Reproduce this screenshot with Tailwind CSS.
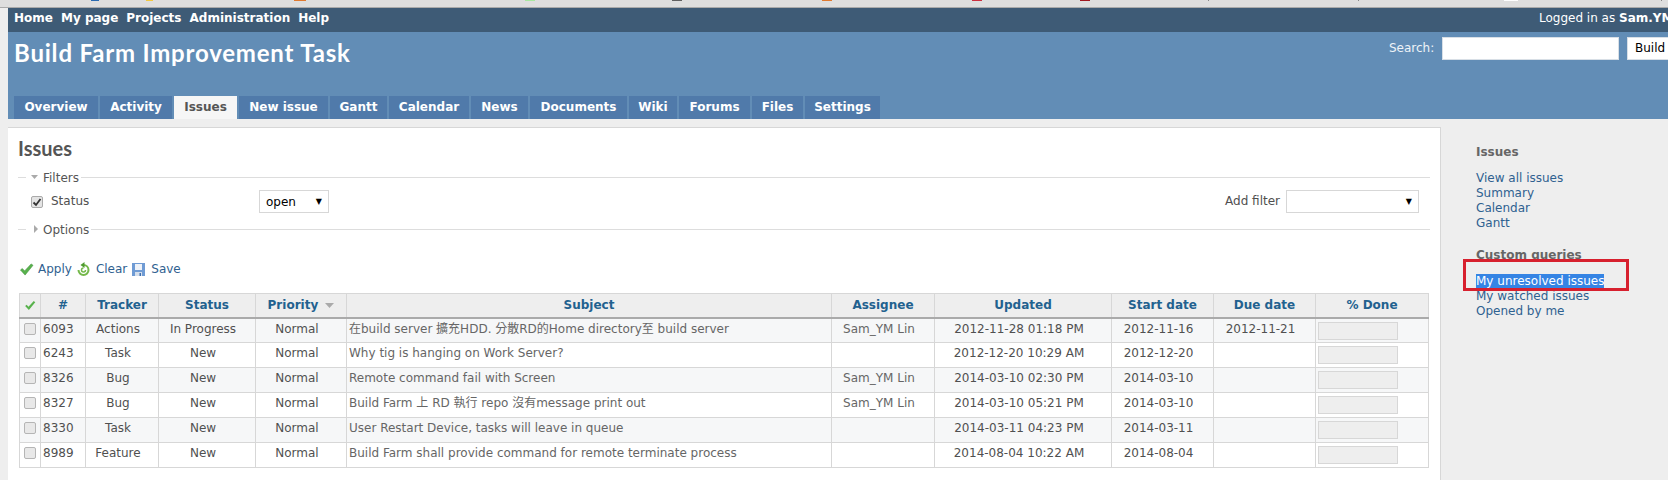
<!DOCTYPE html>
<html lang="en">
<head>
    <meta charset="UTF-8">
    <script src="https://cdn.jsdelivr.net/npm/@tailwindcss/browser@4"></script>
    <title>Issues - Build Farm Improvement Task</title>
</head>
<body class="w-[1668px] h-[480px] overflow-hidden bg-[#eeeeee] font-['DejaVu_Sans','Noto_Sans_CJK_TC',sans-serif] text-[12px] text-[#505050]">

    <!-- browser bookmarks bar, only the bottom edge is visible -->
    <div class="h-[8px] bg-[#dedede] border-b border-b-[#aaaaaa] flex items-start">
        <span class="ml-[91px] w-[8px] h-[1px] bg-[#2a6ab0]"></span>
        <span class="ml-[47px] w-[7px] h-[1px] bg-[#f2c840]"></span>
        <span class="ml-[141px] w-[12px] h-[1px] bg-[#e07a30]"></span>
        <span class="ml-[219px] w-[10px] h-[1px] bg-[#a8e8a0]"></span>
        <span class="ml-[137px] w-[10px] h-[1px] bg-[#606060]"></span>
        <span class="ml-[140px] w-[10px] h-[1px] bg-[#e07a30]"></span>
        <span class="ml-[140px] w-[10px] h-[1px] bg-[#cc3040]"></span>
        <span class="ml-[98px] w-[10px] h-[1px] bg-[#a01820]"></span>
        <span class="ml-[118px] w-[1px] h-[1px] bg-[#888888]"></span>
        <span class="ml-[149px] w-[1px] h-[1px] bg-[#888888]"></span>
        <span class="ml-[145px] w-[14px] h-[1px] bg-[#ffffff]"></span>
        <span class="ml-[143px] w-[1px] h-[1px] bg-[#888888]"></span>
    </div>

    <div class="ml-[8px]">
        <!-- top menu -->
        <div class="h-[24px] bg-[#3e5b76] flex justify-between items-center pl-[6px] pb-[4px] text-white whitespace-nowrap overflow-hidden">
            <div class="flex gap-[8px] font-bold">
                <a>Home</a><a>My page</a><a>Projects</a><a>Administration</a><a>Help</a>
            </div>
            <div class="w-[129px] shrink-0">Logged in as <b>Sam.YM</b></div>
        </div>

        <!-- header -->
        <div class="relative h-[87px] bg-[#628db6] text-white overflow-hidden">
            <div class="flex justify-between pl-[6px]">
                <h1 class="mt-[1px] text-[24px] leading-[40px] font-bold tracking-[0.8px] font-['Lato',sans-serif]">Build Farm Improvement Task</h1>
                <div class="flex items-start shrink-0 w-[279px] pt-[5px] whitespace-nowrap">
                    <span class="w-[53px] shrink-0 leading-[22px] text-[#eef3f8]">Search:</span>
                    <input type="text" class="w-[177px] shrink-0 h-[23px] bg-white border border-[#d8dfe6]">
                    <div class="ml-[8px] w-[90px] shrink-0 h-[23px] pl-[7px] leading-[21px] bg-white border border-[#d8dfe6] text-black">Build Farm</div>
                </div>
            </div>
            <div class="absolute bottom-0 left-[6px] flex gap-[2px] font-bold h-[23px] leading-[23px] whitespace-nowrap">
                <a class="w-[84px] text-center bg-[#507aaa]">Overview</a>
                <a class="w-[72px] text-center bg-[#507aaa]">Activity</a>
                <a class="w-[63px] text-center bg-[#f6f6f6] text-[#555555]">Issues</a>
                <a class="w-[89px] text-center bg-[#507aaa]">New issue</a>
                <a class="w-[57px] text-center bg-[#507aaa]">Gantt</a>
                <a class="w-[80px] text-center bg-[#507aaa]">Calendar</a>
                <a class="w-[57px] text-center bg-[#507aaa]">News</a>
                <a class="w-[97px] text-center bg-[#507aaa]">Documents</a>
                <a class="w-[48px] text-center bg-[#507aaa]">Wiki</a>
                <a class="w-[71px] text-center bg-[#507aaa]">Forums</a>
                <a class="w-[51px] text-center bg-[#507aaa]">Files</a>
                <a class="w-[75px] text-center bg-[#507aaa]">Settings</a>
            </div>
        </div>

        <div class="flex mt-[8px]">
            <!-- content -->
            <div class="w-[1433px] h-[353px] shrink-0 bg-white border-t border-r border-[#d7d7d7] pl-[10px] pr-[10px]">
                <h2 class="mt-[6px] text-[20px] leading-[28px] font-bold text-[#555555] font-['Lato',sans-serif]">Issues</h2>

                <div class="mt-[7px] flex items-center h-[16px] text-[#555555]">
                    <span class="w-[8px] h-px bg-[#dddddd]"></span>
                    <svg class="ml-[5px] w-[8px] h-[8px]" viewBox="0 0 8 8"><path d="M0 2h7L3.500 6z" fill="#aaaaaa"/></svg>
                    <span class="ml-[4px] mt-[2px]">Filters</span>
                    <span class="ml-[2px] grow h-px bg-[#dddddd]"></span>
                </div>
                <div class="mt-[5px] h-[23px] flex items-center pr-[11px]">
                    <span class="ml-[13px] w-[12px] h-[12px] flex items-center justify-center border border-[#aaaaaa] rounded-[2px] bg-[#e4e4e4]">
                        <svg class="w-[10px] h-[10px]" viewBox="0 0 10 10"><path d="M1.500 5.500 4 8l4.500-6" fill="none" stroke="#333333" stroke-width="1.800"/></svg>
                    </span>
                    <span class="ml-[8px] w-[208px] mb-[2px]">Status</span>
                    <div class="w-[70px] h-[23px] border border-[#d7d7d7] pl-[6px] flex items-center justify-between pr-[6px] text-black">open <span class="text-[8px]">▼</span></div>
                    <span class="ml-auto mr-[6px] mb-[2px]">Add filter</span>
                    <div class="w-[133px] h-[23px] border border-[#d7d7d7] flex items-center justify-end pr-[6px] text-black"><span class="text-[8px]">▼</span></div>
                </div>
                <div class="mt-[8px] flex items-center h-[16px] text-[#555555]">
                    <span class="w-[8px] h-px bg-[#dddddd]"></span>
                    <svg class="ml-[6px] w-[8px] h-[8px]" viewBox="0 0 8 8"><path d="M2 0v8l4-4z" fill="#aaaaaa"/></svg>
                    <span class="ml-[3px] mt-[2px]">Options</span>
                    <span class="ml-[2px] grow h-px bg-[#dddddd]"></span>
                </div>

                <div class="mt-[24px] h-[16px] flex items-center text-[#2f6190]">
                    <svg class="ml-[1px] w-[15px] h-[13px]" viewBox="0 0 16 14"><path d="M1.500 7.500 3.500 6 6 8.500 13 1l2 1.500L6.500 13z" fill="#58b24c" stroke="#3f8f3a" stroke-width=".6" stroke-linejoin="round"/></svg>
                    <a class="ml-[4px]">Apply</a>
                    <svg class="ml-[5px] w-[13px] h-[15px]" viewBox="0 0 13 15"><path d="M6.500 3a5 5 0 0 1 5 5 5 5 0 0 1-5 5 5 5 0 0 1-5-5" fill="none" stroke="#74b84a" stroke-width="2"/><path d="M6.500 6a2 2 0 1 0 2 2" fill="none" stroke="#74b84a" stroke-width="1.500"/><path d="M7.500 0v6L3.500 3z" fill="#4f9a2f"/></svg>
                    <a class="ml-[6px]">Clear</a>
                    <svg class="ml-[5px] w-[13px] h-[13px]" viewBox="0 0 13 13"><path fill="#6f9bd4" d="M0 0h13v13H0z"/><path fill="#eef2f8" d="M3 1h7v6H3z"/><path fill="#d5dfec" d="M3 9h7v4H3z"/><path fill="#3f6fae" d="M7.500 10h1.500v3H7.500z"/></svg>
                    <a class="ml-[6px]">Save</a>
                </div>

                <table class="ml-[1px] mt-[16px] table-fixed border-collapse w-[1409px] text-center">
                    <colgroup>
                        <col class="w-[21px]"><col class="w-[45px]"><col class="w-[73px]"><col class="w-[97px]"><col class="w-[91px]"><col class="w-[485px]"><col class="w-[103px]"><col class="w-[177px]"><col class="w-[102px]"><col class="w-[102px]"><col class="w-[113px]">
                    </colgroup>
                    <thead>
                        <tr class="h-[24px] bg-[#eeeeee] font-bold text-[#22618f] [&>th]:border [&>th]:border-[#d7d7d7] [&>th]:border-b-2 [&>th]:border-b-[#aaaaaa]">
                            <th><svg class="mx-auto w-[12px] h-[11px]" viewBox="0 0 16 14"><path d="M1.500 7.500 3.500 6 6 8.500 13 1l2 1.500L6.500 13z" fill="#58b24c"/></svg></th>
                            <th>#</th>
                            <th>Tracker</th>
                            <th>Status</th>
                            <th>Priority <svg class="inline w-[9px] h-[7px] ml-[3px]" viewBox="0 0 9 7"><path d="M0 1h9L4.500 6z" fill="#aaaaaa"/></svg></th>
                            <th>Subject</th>
                            <th>Assignee</th>
                            <th>Updated</th>
                            <th>Start date</th>
                            <th>Due date</th>
                            <th>% Done</th>
                        </tr>
                    </thead>
                    <tbody class="[&_td]:border [&_td]:border-[#d7d7d7] [&_td]:align-top [&_td]:pt-[1px] [&_tr]:h-[25px] [&>tr>td:nth-child(n+3)]:pr-[8px]">
                        <tr class="bg-[#f6f7f8]">
                            <td><span class="block mx-auto mt-[3px] w-[12px] h-[12px] border border-[#b5b5b5] rounded-[2px] bg-[#e8e8e8]"></span></td>
                            <td class="text-left pl-[2px]">6093</td><td>Actions</td><td>In Progress</td><td>Normal</td>
                            <td class="text-left pl-[2px] text-[#666666]">在build server 擴充HDD. 分散RD的Home directory至 build server</td>
                            <td class="text-[#666666]">Sam_YM Lin</td><td>2012-11-28 01:18 PM</td><td>2012-11-16</td><td>2012-11-21</td>
                            <td><span class="block ml-[2px] mt-[2px] w-[80px] h-[18px] bg-[#eeeeee] border border-[#d7d7d7]"></span></td>
                        </tr>
                        <tr class="bg-white">
                            <td><span class="block mx-auto mt-[3px] w-[12px] h-[12px] border border-[#b5b5b5] rounded-[2px] bg-[#e8e8e8]"></span></td>
                            <td class="text-left pl-[2px]">6243</td><td>Task</td><td>New</td><td>Normal</td>
                            <td class="text-left pl-[2px] text-[#666666]">Why tig is hanging on Work Server?</td>
                            <td class="text-[#666666]"></td><td>2012-12-20 10:29 AM</td><td>2012-12-20</td><td></td>
                            <td><span class="block ml-[2px] mt-[2px] w-[80px] h-[18px] bg-[#eeeeee] border border-[#d7d7d7]"></span></td>
                        </tr>
                        <tr class="bg-[#f6f7f8]">
                            <td><span class="block mx-auto mt-[3px] w-[12px] h-[12px] border border-[#b5b5b5] rounded-[2px] bg-[#e8e8e8]"></span></td>
                            <td class="text-left pl-[2px]">8326</td><td>Bug</td><td>New</td><td>Normal</td>
                            <td class="text-left pl-[2px] text-[#666666]">Remote command fail with Screen</td>
                            <td class="text-[#666666]">Sam_YM Lin</td><td>2014-03-10 02:30 PM</td><td>2014-03-10</td><td></td>
                            <td><span class="block ml-[2px] mt-[2px] w-[80px] h-[18px] bg-[#eeeeee] border border-[#d7d7d7]"></span></td>
                        </tr>
                        <tr class="bg-white">
                            <td><span class="block mx-auto mt-[3px] w-[12px] h-[12px] border border-[#b5b5b5] rounded-[2px] bg-[#e8e8e8]"></span></td>
                            <td class="text-left pl-[2px]">8327</td><td>Bug</td><td>New</td><td>Normal</td>
                            <td class="text-left pl-[2px] text-[#666666]">Build Farm 上 RD 執行 repo 沒有message print out</td>
                            <td class="text-[#666666]">Sam_YM Lin</td><td>2014-03-10 05:21 PM</td><td>2014-03-10</td><td></td>
                            <td><span class="block ml-[2px] mt-[2px] w-[80px] h-[18px] bg-[#eeeeee] border border-[#d7d7d7]"></span></td>
                        </tr>
                        <tr class="bg-[#f6f7f8]">
                            <td><span class="block mx-auto mt-[3px] w-[12px] h-[12px] border border-[#b5b5b5] rounded-[2px] bg-[#e8e8e8]"></span></td>
                            <td class="text-left pl-[2px]">8330</td><td>Task</td><td>New</td><td>Normal</td>
                            <td class="text-left pl-[2px] text-[#666666]">User Restart Device, tasks will leave in queue</td>
                            <td class="text-[#666666]"></td><td>2014-03-11 04:23 PM</td><td>2014-03-11</td><td></td>
                            <td><span class="block ml-[2px] mt-[2px] w-[80px] h-[18px] bg-[#eeeeee] border border-[#d7d7d7]"></span></td>
                        </tr>
                        <tr class="bg-white">
                            <td><span class="block mx-auto mt-[3px] w-[12px] h-[12px] border border-[#b5b5b5] rounded-[2px] bg-[#e8e8e8]"></span></td>
                            <td class="text-left pl-[2px]">8989</td><td>Feature</td><td>New</td><td>Normal</td>
                            <td class="text-left pl-[2px] text-[#666666]">Build Farm shall provide command for remote terminate process</td>
                            <td class="text-[#666666]"></td><td>2014-08-04 10:22 AM</td><td>2014-08-04</td><td></td>
                            <td><span class="block ml-[2px] mt-[2px] w-[80px] h-[18px] bg-[#eeeeee] border border-[#d7d7d7]"></span></td>
                        </tr>
                    </tbody>
                </table>
            </div>

            <!-- sidebar -->
            <div class="relative grow pl-[35px] pt-[18px] text-[#2f6190] leading-[15px]">
                <h3 class="font-bold text-[#666666]">Issues</h3>
                <div class="mt-[11px] flex flex-col">
                    <a>View all issues</a><a>Summary</a><a>Calendar</a><a>Gantt</a>
                </div>
                <h3 class="mt-[17px] font-bold text-[#666666]">Custom queries</h3>
                <div class="mt-[11px] flex flex-col items-start">
                    <a class="bg-[#3584e4] text-white">My unresolved issues</a><a>My watched issues</a><a>Opened by me</a>
                </div>
                <div class="absolute left-[22px] top-[132px] w-[166px] h-[32px] border-[3px] border-[#d7202e]"></div>
            </div>
        </div>
    </div>
</body>
</html>
